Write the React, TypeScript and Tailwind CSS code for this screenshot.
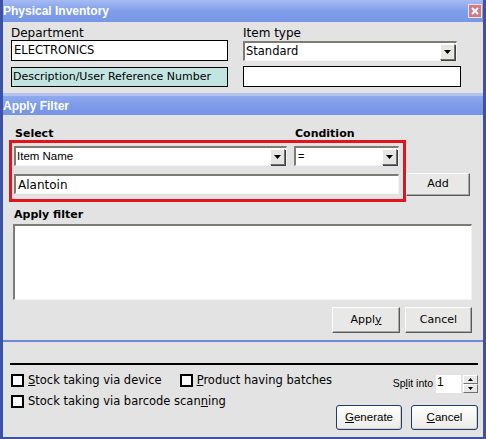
import React from 'react';

const tahoma = "font-['Liberation_Sans',Arial,sans-serif]";

function CloseBtn() {
  return (
    <div className="w-[14px] h-[14px] border border-[#f3dede] bg-[#cd7a8a] flex items-center justify-center">
      <svg width="8" height="8" viewBox="0 0 8 8">
        <path d="M1 1L7 7M7 1L1 7" stroke="#fff" strokeWidth="2" />
      </svg>
    </div>
  );
}

function DropArrow() {
  return (
    <div className="w-[15px] h-[16px] shrink-0 mr-[1px] bg-[#e6e6e2] border border-t-white border-l-white border-b-[#707070] border-r-[#707070] shadow-[1px_1px_0_#404040] flex items-center justify-center">
      <svg width="7" height="4" viewBox="0 0 7 4">
        <path d="M0 0H7L3.5 4Z" fill="#000" />
      </svg>
    </div>
  );
}

function Select({ text, className, textClass }: { text: string; className: string; textClass: string }) {
  return (
    <div
      className={
        'flex items-center bg-white border-t-2 border-l-2 border-b border-r border-t-[#7c7c72] border-l-[#7c7c72] border-b-[#f4f4f4] border-r-[#f4f4f4] ' +
        className
      }
    >
      <span className={'flex-1 pl-[1px] ' + textClass}>{text}</span>
      <DropArrow />
    </div>
  );
}

function RaisedBtn({ children, className }: { children: React.ReactNode; className: string }) {
  return (
    <div
      className={
        'flex items-center justify-center bg-[#e8e8e6] border border-t-white border-l-white border-b-[#5a5a5a] border-r-[#5a5a5a] shadow-[inset_-1px_-1px_0_#a8a8a8] text-[11px] ' +
        className
      }
    >
      {children}
    </div>
  );
}

function XpBtn({ children, className }: { children: React.ReactNode; className: string }) {
  return (
    <div
      className={
        'flex items-center justify-center rounded-[3px] border border-[#1c3c74] bg-gradient-to-b from-white to-[#ecebe6] shadow-[inset_-1px_-1px_0_#d6d0c4] text-[11.5px] ' +
        tahoma +
        ' ' +
        className
      }
    >
      {children}
    </div>
  );
}

function Check({ children, className = '' }: { children: React.ReactNode; className?: string }) {
  return (
    <div className={'flex items-center h-[13px] ' + className}>
      <div className="w-[13px] h-[13px] border-2 border-black bg-[#fafafa] shrink-0" />
      <span className="ml-[4px] text-[11.5px] leading-[13px] whitespace-nowrap">{children}</span>
    </div>
  );
}

export default function App() {
  return (
    <div className="w-[486px] h-[439px] overflow-hidden bg-[#e3e3e3] border-l-[3px] border-r-[3px] border-b-[2px] border-[#3d52a2] flex flex-col font-['DejaVu_Sans',Verdana,sans-serif] text-black">
      {/* title bar */}
      <div className="h-[22px] shrink-0 flex items-center justify-between pr-[1px] bg-gradient-to-b from-[#a6bbf2] via-[#809ee9] to-[#7896e6]">
        <span className={'text-white font-bold text-[12px] ' + tahoma}>Physical Inventory</span>
        <CloseBtn />
      </div>

      {/* header fields */}
      <div className="h-[71px] shrink-0 flex pl-[8px] pt-[4px]">
        <div className="w-[217px] flex flex-col">
          <div className="h-[14px] text-[12px] leading-[14px]">Department</div>
          <div className="h-[21px] bg-white border border-black flex items-center pl-[2px] text-[11.5px]">ELECTRONICS</div>
          <div className="mt-[6px] h-[20px] bg-[#c3e5e1] border border-black flex items-center pl-[1px] text-[11px] whitespace-nowrap">
            Description/User Reference Number
          </div>
        </div>
        <div className="ml-[15px] w-[218px] flex flex-col">
          <div className="h-[14px] text-[12px] leading-[14px]">Item type</div>
          <Select text="Standard" className="mt-[1px] h-[20px] w-[214px]" textClass="text-[11.5px]" />
          <div className="mt-[5px] h-[21px] bg-white border border-black" />
        </div>
      </div>

      <div className="h-[3px] shrink-0 bg-[#b4c3ee]" />

      {/* Apply Filter header */}
      <div className="h-[19px] shrink-0 flex items-center bg-gradient-to-b from-[#8faaee] via-[#7d9be8] to-[#7694e5]">
        <span className={'text-white font-bold text-[12px] ' + tahoma}>Apply Filter</span>
      </div>

      {/* filter body */}
      <div className="h-[225px] shrink-0 flex flex-col">
        <div className="mt-[12px] h-[13px] flex pl-[12px] text-[11px] font-bold leading-[13px]">
          <span className="w-[280px]">Select</span>
          <span>Condition</span>
        </div>
        <div className="flex pl-[6px]">
          <div className="w-[397px] h-[62px] border-[3px] border-[#e3141c] pl-[2px] pt-[3px] flex flex-col">
            <div className="flex">
              <Select text="Item Name" className="h-[20px] w-[273px]" textClass={'text-[11.5px] ' + tahoma} />
              <Select text="=" className="ml-[7px] h-[20px] w-[105px]" textClass={'text-[11px] pl-[2px] ' + tahoma} />
            </div>
            <div className="mt-[8px] h-[20px] w-[385px] bg-white flex items-center pl-[2px] text-[12px] border-t-2 border-l-2 border-b border-r border-t-[#7c7c72] border-l-[#7c7c72] border-b-[#f4f4f4] border-r-[#f4f4f4]">
              Alantoin
            </div>
          </div>
          <RaisedBtn className="mt-[33px] w-[64px] h-[23px]">Add</RaisedBtn>
        </div>
        <div className="mt-[6px] h-[13px] pl-[11px] text-[11px] font-bold leading-[13px]">Apply filter</div>
        <div className="mt-[3px] ml-[10px] w-[459px] h-[76px] bg-white border-t-2 border-l-2 border-b border-r border-t-[#7c7c72] border-l-[#7c7c72] border-b-[#f4f4f4] border-r-[#f4f4f4]" />
        <div className="mt-[7px] flex justify-end pr-[11px] gap-[5px]">
          <RaisedBtn className="w-[68px] h-[26px]">
            <span>
              Appl<span className="underline">y</span>
            </span>
          </RaisedBtn>
          <RaisedBtn className="w-[67px] h-[26px]">Cancel</RaisedBtn>
        </div>
      </div>

      <div className="h-[2px] shrink-0 bg-[#6f89d8]" />

      {/* bottom */}
      <div className="flex-1 flex flex-col">
        <div className="mt-[21px] ml-[7px] w-[468px] h-[2px] bg-black" />
        <div className="mt-[9px] flex justify-between pl-[8px] pr-[5px]">
          <div className="flex flex-col">
            <div className="flex">
              <Check>
                <span className="underline">S</span>tock taking via device
              </Check>
              <Check className="ml-[18px]">
                <span className="underline">P</span>roduct having batches
              </Check>
            </div>
            <Check className="mt-[8px]">
              Stock taking via barcode scan<span className="underline">n</span>ing
            </Check>
          </div>
          <div className="w-[142px] flex flex-col items-end">
            <div className="mt-[1px] h-[18px] flex items-center">
              <span className={'text-[10.5px] ' + tahoma}>
                Sp<span className="underline">l</span>it into
              </span>
              <div className={'ml-[3px] w-[25px] h-[18px] bg-white text-[12px] leading-[14px] pl-[1px] ' + tahoma}>1</div>
              <div className="ml-[2px] w-[15px] h-[18px] flex flex-col">
                <div className="h-[9px] bg-[#e8e8e6] border border-t-white border-l-white border-b-[#707070] border-r-[#707070] flex items-center justify-center">
                  <svg width="5" height="3" viewBox="0 0 5 3">
                    <path d="M0 3H5L2.5 0Z" fill="#000" />
                  </svg>
                </div>
                <div className="h-[9px] bg-[#e8e8e6] border border-t-white border-l-white border-b-[#707070] border-r-[#707070] flex items-center justify-center">
                  <svg width="5" height="3" viewBox="0 0 5 3">
                    <path d="M0 0H5L2.5 3Z" fill="#000" />
                  </svg>
                </div>
              </div>
            </div>
            <div className="mt-[12px] flex gap-[9px]">
              <XpBtn className="w-[66px] h-[25px]">
                <span>
                  <span className="underline">G</span>enerate
                </span>
              </XpBtn>
              <XpBtn className="w-[67px] h-[25px]">
                <span>
                  <span className="underline">C</span>ancel
                </span>
              </XpBtn>
            </div>
          </div>
        </div>
      </div>
    </div>
  );
}
